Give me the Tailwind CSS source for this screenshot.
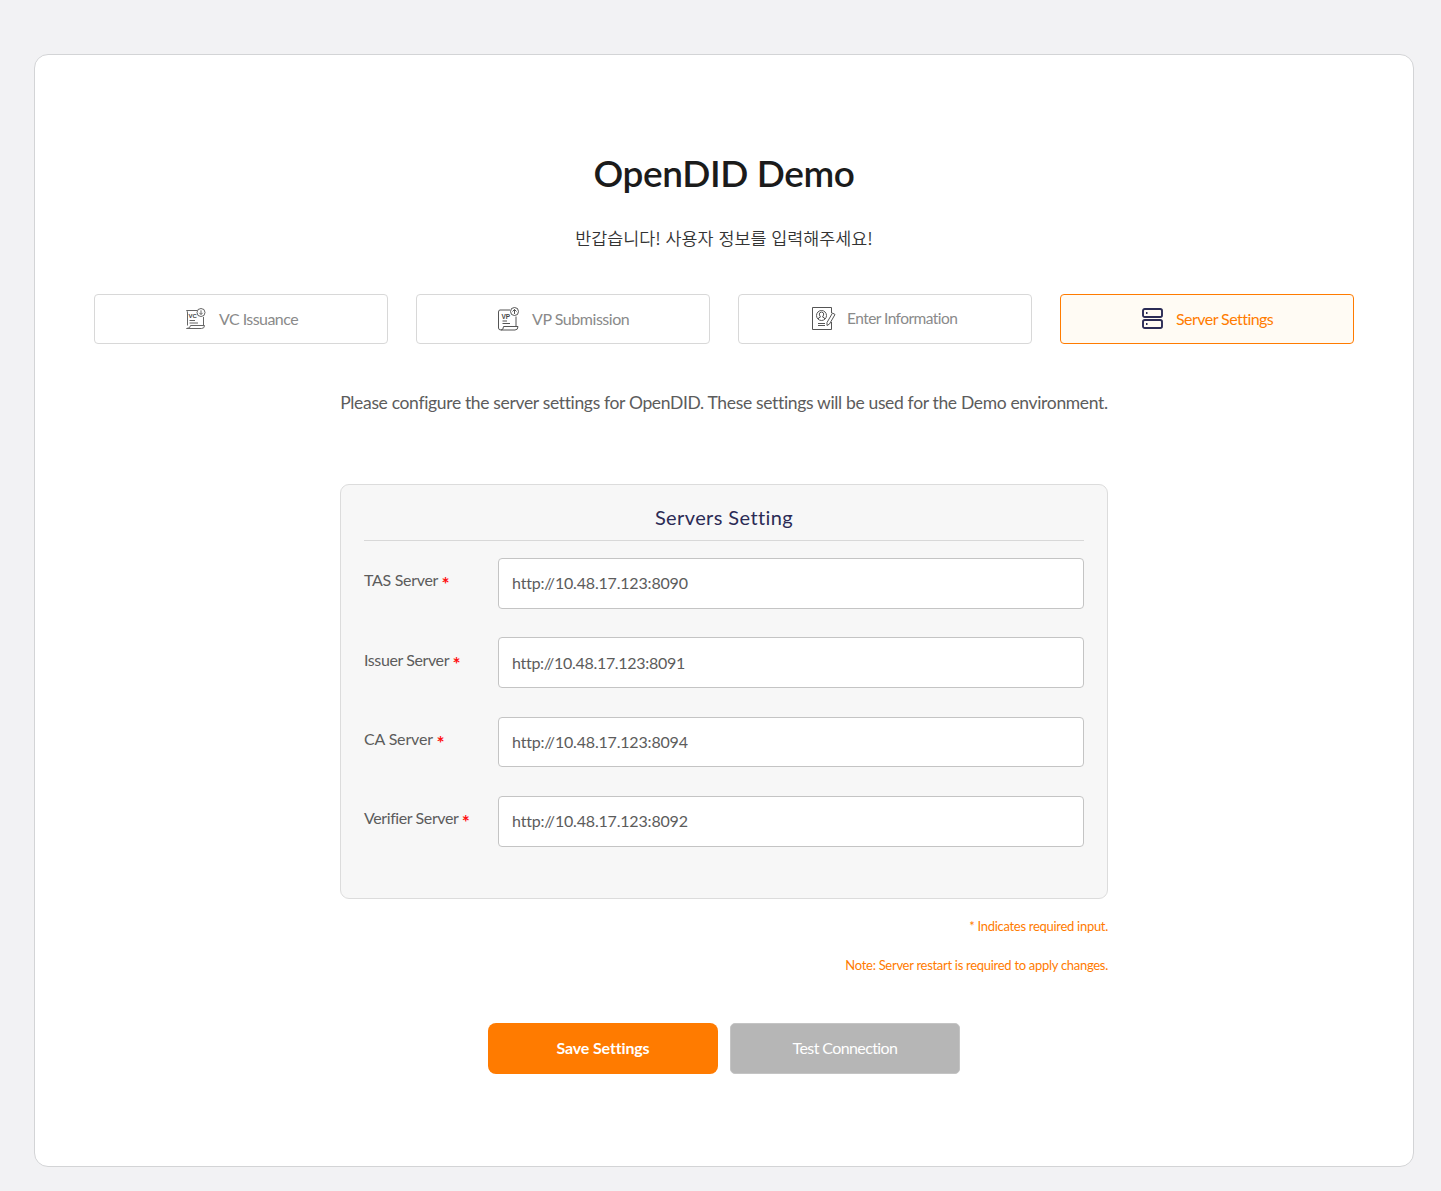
<!DOCTYPE html>
<html lang="ko">
<head>
<meta charset="utf-8">
<title>OpenDID Demo</title>
<script src="https://cdn.jsdelivr.net/npm/@tailwindcss/browser@4"></script>
</head>
<body class="bg-[#f2f2f4] font-['Lato','Noto_Sans_CJK_KR',sans-serif] h-[1191px] pt-[54px] pl-[34px] overflow-hidden">
<main class="w-[1380px] h-[1113px] bg-white border border-[#d3d4d6] rounded-[14px] px-[59px] pt-[94px] flex flex-col items-center">
  <h1 class="h-[48px] leading-[48px] text-[37px] tracking-[-0.4px] font-semibold text-[#1b1b1b] whitespace-nowrap">OpenDID Demo</h1>
  <p class="mt-[26px] h-[30px] leading-[30px] text-[17.4px] font-['Noto_Sans_CJK_KR',sans-serif] font-[350] text-[#333] whitespace-nowrap">반갑습니다! 사용자 정보를 입력해주세요!</p>
  <nav class="mt-[41px] w-full grid grid-cols-4 gap-[28px] text-[16px] text-[#8a8a8a]">
    <a class="h-[50px] border border-[#d8d8d8] rounded-[4px] pl-[91px] flex items-center whitespace-nowrap">
      <svg class="w-[20px] h-[22px] mr-[13px] shrink-0" viewBox="0 0 20 22" fill="none" stroke="#666" stroke-width="1"><path d="M11 2.500H.5Q1.500 3 1.500 5V17.500M17.500 9V17.500M.5 20.500Q4.500 20.500 4.500 17.500H18.500Q18.500 20.500 15.500 20.500H.5M3.500 12.500H9M3.500 15H12"/><circle cx="15" cy="4.500" r="4"/><path d="M15 2.300V6.500M13.300 4.800L15 6.500L16.700 4.800"/><text x="2.500" y="10" font-size="6" font-weight="bold" font-family="Liberation Sans" fill="#444" stroke="none">VC</text></svg>
      <span class="tracking-[-0.55px]">VC Issuance</span>
    </a>
    <a class="h-[50px] border border-[#d8d8d8] rounded-[4px] pl-[81px] flex items-center whitespace-nowrap">
      <svg class="w-[22px] h-[24px] mr-[12px] shrink-0" viewBox="0 0 22 24" fill="none" stroke="#555" stroke-width="1"><path d="M12 3H2Q.5 3 .5 5V21Q.5 23 3 23H17Q20 23 20 19.500H5.500Q5.500 23 3 23M18 9.500V19.500M4.500 14H9M4.500 16.500H12"/><circle cx="16.500" cy="4.500" r="4"/><path d="M16.500 7V2.500M14.500 4.500L16.500 2.500L18.500 4.500"/><text x="3.500" y="11.500" font-size="6.500" font-weight="bold" font-family="Liberation Sans" fill="#444" stroke="none">VP</text></svg>
      <span class="tracking-[-0.45px]">VP Submission</span>
    </a>
    <a class="h-[50px] border border-[#d8d8d8] rounded-[4px] pl-[73px] flex items-center whitespace-nowrap">
      <svg class="w-[24px] h-[24px] mr-[11px] shrink-0" viewBox="0 0 24 24" fill="none" stroke="#555" stroke-width="1"><path d="M19.500 6V.5H.5V22.500H19.500V15"/><circle cx="9.500" cy="8.500" r="5"/><path d="M6.500 12V11L8.500 10Q6.800 8 7.500 6Q9.500 4 11.500 6Q12.200 8 10.500 10L12.500 11V12M6 16.500H13M6 18.500H13"/><path d="M20.500 6L23 7.500L17.500 17L15 18.500V15.500Z" fill="white"/></svg>
      <span class="text-[15.5px] tracking-[-0.55px]">Enter Information</span>
    </a>
    <a class="h-[50px] border border-[#ff7b00] bg-[#fffbf4] rounded-[4px] pl-[81px] flex items-center whitespace-nowrap text-[#ff7b00]">
      <svg class="w-[21px] h-[21px] mr-[13px] mb-[2px] shrink-0" viewBox="0 0 21 21" fill="none" stroke="#2b2b55" stroke-width="1.900"><rect x="1" y="1" width="19" height="8" rx="1.800"/><rect x="1" y="12" width="19" height="8" rx="1.800"/><path d="M4 5H5.500M4 16H5.500"/></svg>
      <span class="tracking-[-0.55px]">Server Settings</span>
    </a>
  </nav>
  <p class="mt-[43px] h-[32px] leading-[32px] text-[17.5px] tracking-[-0.34px] text-[#5c5c5c] whitespace-nowrap">Please configure the server settings for OpenDID. These settings will be used for the Demo environment.</p>
  <section class="mt-[65px] w-[768px] h-[415px] shrink-0 bg-[#f7f7f7] border border-[#dcdcdc] rounded-[9px] px-[23px] pt-[16px]">
    <h2 class="h-[40px] leading-[33px] border-b border-[#d8d8d8] text-center text-[20px] tracking-[0.4px] text-[#2b2b55]">Servers Setting</h2>
    <div class="mt-[17.15px] flex flex-col gap-[28.83px] text-[16px] text-[#5c5c5c]">
      <div class="flex h-[50.5px]"><label class="w-[134px] leading-[43px] tracking-[-0.3px] whitespace-nowrap">TAS Server <b class="text-[19px] leading-none align-[-5px] text-[#f11]">*</b></label><div class="flex-1 bg-white border border-[#c4c4c4] rounded-[4px] pl-[13px] leading-[47px] tracking-[-0.18px]">http://10.48.17.123:8090</div></div>
      <div class="flex h-[50.5px]"><label class="w-[134px] leading-[45px] tracking-[-0.4px] whitespace-nowrap">Issuer Server <b class="text-[19px] leading-none align-[-5px] text-[#f11]">*</b></label><div class="flex-1 bg-white border border-[#c4c4c4] rounded-[4px] pl-[13px] leading-[49px] tracking-[-0.3px]">http://10.48.17.123:8091</div></div>
      <div class="flex h-[50.5px]"><label class="w-[134px] leading-[43px] tracking-[-0.15px] whitespace-nowrap">CA Server <b class="text-[19px] leading-none align-[-5px] text-[#f11]">*</b></label><div class="flex-1 bg-white border border-[#c4c4c4] rounded-[4px] pl-[13px] leading-[47px] tracking-[-0.18px]">http://10.48.17.123:8094</div></div>
      <div class="flex h-[50.5px]"><label class="w-[134px] leading-[43px] tracking-[-0.4px] whitespace-nowrap">Verifier Server <b class="text-[19px] leading-none align-[-5px] text-[#f11]">*</b></label><div class="flex-1 bg-white border border-[#c4c4c4] rounded-[4px] pl-[13px] leading-[47px] tracking-[-0.18px]">http://10.48.17.123:8092</div></div>
    </div>
  </section>
  <div class="w-[768px] mt-[17px] text-right text-[13px] leading-[20px] tracking-[-0.29px] text-[#ff7b00]">
    <p>* Indicates required input.</p>
    <p class="mt-[19px]">Note: Server restart is required to apply changes.</p>
  </div>
  <div class="mt-[48px] flex gap-[12px] text-[16px] text-white">
    <button class="w-[230px] h-[51px] pb-[2px] rounded-[8px] bg-[#ff7b00] font-bold tracking-[-0.15px]">Save Settings</button>
    <button class="w-[230px] h-[51px] pb-[2px] rounded-[5px] bg-[#b6b6b6] border border-[#c4c4c4] tracking-[-0.6px]">Test Connection</button>
  </div>
</main>
</body>
</html>
